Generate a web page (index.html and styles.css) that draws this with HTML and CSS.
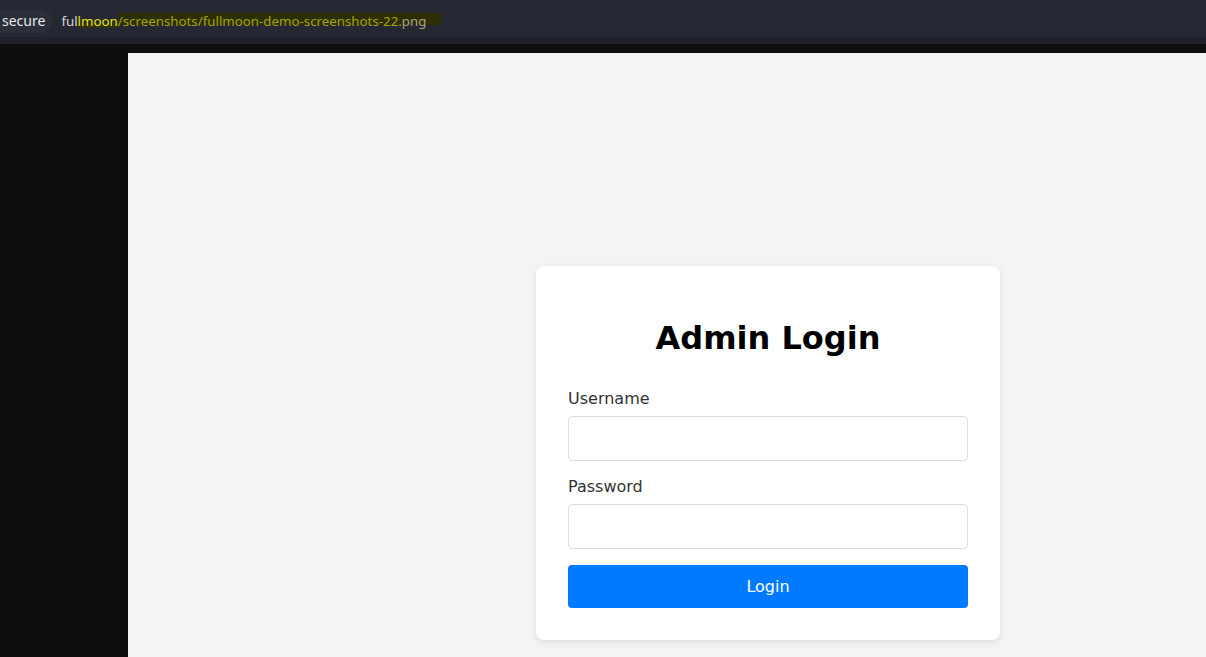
FILE: index.html
```html
<!DOCTYPE html>
<html>
<head>
<meta charset="utf-8">
<link rel="stylesheet" href="styles.css">
</head>
<body>
<div class="topbar">
  <span class="secure">secure</span>
  <span class="url"><span class="u-host">ful</span><span class="u-mark">lmoon</span><span class="u-path">/screenshots/fullmoon-demo-screenshots-22.</span><span class="u-ext">png</span></span>
</div>
<div class="gap"></div>
<div class="frame">
  <div class="side"></div>
  <main class="content">
    <div class="card">
      <h1 class="title">Admin Login</h1>
      <form class="form">
        <div class="group">
          <label class="label" for="u">Username</label>
          <input class="input" id="u" type="text">
        </div>
        <div class="group">
          <label class="label" for="p">Password</label>
          <input class="input" id="p" type="password">
        </div>
        <button class="btn" type="button">Login</button>
      </form>
    </div>
  </main>
</div>
</body>
</html>
```

FILE: styles.css
```css
* { box-sizing: border-box; }
html, body { margin: 0; padding: 0; height: 100%; overflow: hidden; }
body { background: #0e0e0e; font-family: "DejaVu Sans", sans-serif; }

.topbar {
  height: 44px;
  background: linear-gradient(to bottom, #252733 0, #252733 37px, #20222b 37px, #20222b 44px);
  display: flex;
  align-items: center;
  padding-bottom: 2px;
  font-family: "Noto Sans", sans-serif;
  font-size: 14px;
}
.secure {
  color: #e8e8ec;
  background: #2c2e3a;
  border-radius: 0 12px 12px 0;
  padding: 2px 7px 3px 2px;
  line-height: 18px;
}
.url { margin-left: 9px; line-height: 18px; white-space: nowrap; font-size: 13.3px; }
.u-host { color: #d6d6da; }
.u-mark { color: #e2e200; background: linear-gradient(to bottom, transparent 62%, #30300a 62%, #30300a 90%, transparent 90%); }
.u-path { color: #a3a310; background: linear-gradient(to bottom, transparent 5%, #2e2e04 5%, #2e2e04 70%, transparent 70%); }
.u-ext { color: #a4a48a; background: linear-gradient(to bottom, transparent 5%, #2e2e04 5%, #2e2e04 70%, transparent 70%); padding-right: 15px; }

.gap { height: 9px; }

.frame { display: flex; height: calc(100% - 53px); }
.side { width: 128px; flex: none; background: #0e0e0e; }
.content {
  flex: 1;
  background: #f4f4f4;
  padding: 213px 0 0 408px;
}
.card {
  width: 464px;
  background: #fff;
  border-radius: 8px;
  padding: 32px;
  box-shadow: 0 2px 6px rgba(0, 0, 0, 0.1);
}
.title {
  margin: 21px 0 32px;
  font-size: 32px;
  font-weight: bold;
  text-align: center;
  color: #000;
}
.form { margin: 0; }
.group { margin-bottom: 16px; }
.label {
  display: block;
  font-size: 16px;
  color: #333;
  margin-bottom: 8px;
}
.input {
  display: block;
  width: 100%;
  padding: 12px;
  font-size: 16px;
  font-family: "DejaVu Sans", sans-serif;
  line-height: 19px;
  border: 1px solid #dddddd;
  border-radius: 4px;
  background: #fff;
}
.btn {
  display: block;
  width: 100%;
  padding: 12px;
  border: none;
  border-radius: 4px;
  background: #007bff;
  color: #fff;
  font-size: 16px;
  font-family: "DejaVu Sans", sans-serif;
  line-height: 19px;
}
```
